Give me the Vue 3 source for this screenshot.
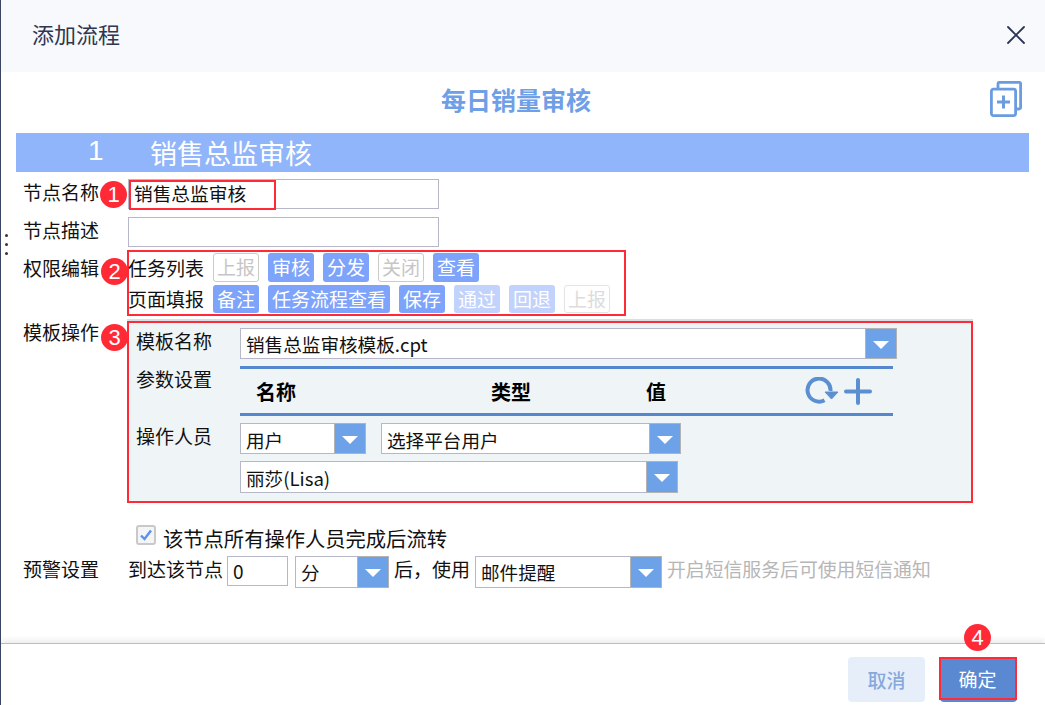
<script setup>
const taskButtons = [
  { text: '上报', kind: 'outline' },
  { text: '审核', kind: 'on' },
  { text: '分发', kind: 'on' },
  { text: '关闭', kind: 'outline' },
  { text: '查看', kind: 'on' }
]
const pageButtons = [
  { text: '备注', kind: 'on' },
  { text: '任务流程查看', kind: 'on' },
  { text: '保存', kind: 'on' },
  { text: '通过', kind: 'soft' },
  { text: '回退', kind: 'soft' },
  { text: '上报', kind: 'faint' }
]
</script>

<template>
  <div class="dialog">
    <div class="grip"><i></i><i></i><i></i></div>
    <header class="head">
      <span class="head-title">添加流程</span>
      <svg class="close" width="18" height="18" viewBox="0 0 18 18">
        <path d="M1 1L17 17M17 1L1 17" stroke="#2c3452" stroke-width="1.8" fill="none" stroke-linecap="round" />
      </svg>
    </header>

    <main class="body">
      <div class="title-row">
        <span class="flow-name">每日销量审核</span>
        <svg class="copy" width="32" height="36" viewBox="0 0 32 36">
          <path d="M8 7V2.5A1.2 1.2 0 0 1 9.2 1.4H29.3A1.3 1.3 0 0 1 30.6 2.7V26.5A1.5 1.5 0 0 1 29 28H26" fill="none" stroke="#6c9ce0" stroke-width="2.8" />
          <rect x="1.4" y="8.2" width="24.2" height="26.4" rx="2" fill="#fff" stroke="#6c9ce0" stroke-width="2.8" />
          <path d="M7 21H20M13.5 14.5V27.5" stroke="#6c9ce0" stroke-width="3" fill="none" />
        </svg>
      </div>

      <div class="bar"><span class="bar-no">1</span><span>销售总监审核</span></div>

      <div class="row r-name">
        <span class="label">节点名称</span>
        <div class="field-wrap">
          <div class="input wide">销售总监审核</div>
          <span class="mark-name"></span>
          <span class="badge b1">1</span>
        </div>
      </div>

      <div class="row r-desc">
        <span class="label">节点描述</span>
        <div class="input wide"></div>
      </div>

      <div class="row r-perm">
        <span class="label">权限编辑</span>
        <div class="perm">
          <span class="badge b2">2</span>
          <div class="perm-row first">
            <span class="perm-label">任务列表</span>
            <span v-for="b in taskButtons" :key="b.text" class="tag" :class="b.kind">{{ b.text }}</span>
          </div>
          <div class="perm-row second">
            <span class="perm-label">页面填报</span>
            <span v-for="b in pageButtons" :key="b.text" class="tag" :class="b.kind">{{ b.text }}</span>
          </div>
        </div>
      </div>

      <div class="row r-tpl">
        <span class="label lbl-tpl">模板操作</span>
        <div class="panel">
          <span class="badge b3">3</span>
          <div class="p-row p-first">
            <span class="p-label">模板名称</span>
            <div class="select s-tpl"><span class="s-text">销售总监审核模板.cpt</span><span class="arrow"></span></div>
          </div>
          <div class="p-row p-param">
            <span class="p-label">参数设置</span>
            <div class="table-head">
              <b class="c1">名称</b>
              <b class="c2">类型</b>
              <b class="c3">值</b>
              <svg class="refresh" width="34" height="28" viewBox="0 0 34 28">
                <path d="M19.5 23.2A11.5 11.5 0 1 1 25.5 14" fill="none" stroke="#5b8fcf" stroke-width="4" />
                <path d="M20 15H33L26.5 22Z" fill="#5b8fcf" stroke="#5b8fcf" stroke-width="1" stroke-linejoin="round" />
              </svg>
              <svg class="plus" width="28" height="27" viewBox="0 0 28 27">
                <path d="M2 13.5H26M14 2V25" stroke="#5b8fcf" stroke-width="4" stroke-linecap="round" fill="none" />
              </svg>
            </div>
          </div>
          <div class="p-row p-op">
            <span class="p-label">操作人员</span>
            <div class="op-col">
              <div class="op-line">
                <div class="select s-user"><span class="s-text">用户</span><span class="arrow"></span></div>
                <div class="select s-plat"><span class="s-text">选择平台用户</span><span class="arrow"></span></div>
              </div>
              <div class="select s-lisa"><span class="s-text">丽莎(Lisa)</span><span class="arrow"></span></div>
            </div>
          </div>
        </div>
      </div>

      <div class="check-row">
        <svg class="check" width="20" height="20" viewBox="0 0 20 20">
          <rect x="1" y="1" width="18" height="18" rx="2" fill="#f4f5f7" stroke="#c9c9c9" stroke-width="2" />
          <path d="M5 10.5L8.5 14L15 5.5" fill="none" stroke="#5c8ff0" stroke-width="2.4" />
        </svg>
        <span>该节点所有操作人员完成后流转</span>
      </div>

      <div class="row r-warn">
        <span class="label">预警设置</span>
        <span class="w-text">到达该节点</span>
        <div class="input w-num">0</div>
        <div class="select s-unit"><span class="s-text">分</span><span class="arrow"></span></div>
        <span class="w-after">后，使用</span>
        <div class="select s-mail"><span class="s-text">邮件提醒</span><span class="arrow"></span></div>
        <span class="w-hint">开启短信服务后可使用短信通知</span>
      </div>
    </main>

    <footer class="foot">
      <button class="btn cancel">取消</button>
      <button class="btn ok">确定<span class="badge b4">4</span></button>
    </footer>
  </div>
</template>

<style scoped>
.dialog {
  position: relative;
  width: 1045px;
  height: 705px;
  box-sizing: border-box;
  border-left: 1px solid #3b4463;
  display: flex;
  flex-direction: column;
  overflow: hidden;
  background: #fff;
  color: #111;
  font-family: "Noto Sans CJK SC", "Noto Sans", sans-serif;
  font-size: 19px;
}
.grip {
  position: absolute;
  left: 4px;
  top: 234px;
  display: flex;
  flex-direction: column;
  gap: 6px;
}
.grip i {
  width: 3px;
  height: 3px;
  background: #333;
  border-radius: 50%;
}
.head {
  height: 72px;
  flex: none;
  box-sizing: border-box;
  background: #f8f9fd;
  display: flex;
  align-items: center;
  justify-content: space-between;
  padding: 0 20px 2px 31px;
}
.head-title {
  font-size: 22px;
  line-height: 30px;
  margin-bottom: 5px;
  color: #2f3650;
}
.body {
  flex: 1;
  padding: 0 16px 0 15px;
  min-height: 0;
}
.title-row {
  height: 61px;
  box-sizing: border-box;
  padding: 9px 7px 16px 0;
  display: grid;
  grid-template-columns: 425px auto 1fr;
  align-items: center;
}
.flow-name {
  grid-column: 2;
  font-size: 25px;
  line-height: 36px;
  font-weight: 700;
  color: #6f9fe6;
}
.copy {
  grid-column: 3;
  justify-self: end;
}
.bar {
  height: 39px;
  background: #90b5fa;
  color: #fff;
  font-size: 27px;
  line-height: 39px;
  padding-left: 72px;
  display: flex;
}
.bar-no {
  width: 62px;
  font-family: "Liberation Sans", sans-serif;
  font-size: 28px;
  line-height: 36px;
}
.row {
  display: flex;
}
.label {
  width: 105px;
  flex: none;
  padding-left: 7px;
  line-height: 26px;
}
.r-name {
  margin-top: 7px;
  height: 30px;
}
.r-desc {
  margin-top: 8px;
  height: 30px;
}
.field-wrap {
  position: relative;
}
.input {
  box-sizing: border-box;
  height: 30px;
  border: 1px solid #b6b8ca;
  background: #fff;
  padding-left: 5px;
  line-height: 28px;
  font-size: 18.7px;
}
.wide {
  width: 311px;
  line-height: 25px;
}
.mark-name {
  position: absolute;
  left: 1px;
  top: 1px;
  width: 147px;
  height: 30px;
  box-sizing: border-box;
  border: 2px solid #ff2a36;
}
.badge {
  position: absolute;
  width: 27px;
  height: 27px;
  border-radius: 50%;
  background: #ff2a36;
  color: #fff;
  font-family: "Liberation Sans", sans-serif;
  font-size: 22px;
  font-weight: 400;
  line-height: 27px;
  text-align: center;
}
.b1 { left: -28px; top: 2px; }
.b2 { left: -28px; top: 6px; }
.b3 { left: -28px; top: 1px; }
.b4 { left: 24px; top: -33px; }
.r-perm {
  margin-top: 3px;
  position: relative;
}
.r-perm .label {
  line-height: 36px;
}
.perm {
  position: relative;
  margin-left: -1px;
  width: 499px;
  height: 66px;
  box-sizing: border-box;
  border: 2px solid #ff2a36;
  padding: 1px 0;
}
.perm-row {
  display: flex;
  gap: 9px;
  align-items: center;
}
.perm-row.first { height: 29px; }
.perm-row.second { height: 28px; margin-top: 3px; }
.perm-label {
  width: 75px;
  line-height: 28px;
  white-space: nowrap;
  text-indent: -1px;
}
.tag {
  box-sizing: border-box;
  height: 100%;
  padding: 0 3px;
  border-radius: 3px;
  line-height: 26px;
  border: 1px solid transparent;
  color: #fff;
  white-space: nowrap;
}
.tag.on { background: #7da3fb; }
.tag.soft { background: #c1d2fc; }
.tag.outline { border-color: #cbcbcb; color: #c6c6c6; background: #fff; }
.tag.faint { border-color: #e4e4e4; color: #dcdcdc; background: #fff; }
.r-tpl {
  margin-top: 5px;
}
.lbl-tpl {
  line-height: 22px;
}
.panel {
  position: relative;
  margin-left: -1px;
  width: 846px;
  height: 182px;
  box-sizing: border-box;
  border: 2px solid #ff2a36;
  background: #eff4f7;
  box-shadow: 0 -2px 0 #d6dee6;
  padding: 5px 0 0 7px;
}
.p-row {
  display: flex;
}
.p-label {
  width: 104px;
  flex: none;
  line-height: 26px;
}
.p-param {
  margin-top: 7px;
}
.p-op {
  margin-top: 7px;
}
.select {
  box-sizing: border-box;
  display: flex;
  align-items: stretch;
  height: 31px;
  border: 1px solid #b6b8ca;
  background: #fff;
}
.s-text {
  flex: 1;
  padding-left: 5px;
  line-height: 29px;
  font-size: 18.6px;
  white-space: nowrap;
}
.op-col .s-text {
  line-height: 31px;
}
.arrow {
  position: relative;
  width: 30px;
  flex: none;
  background: #6ea2e8;
  box-shadow: 0 0 0 1px #b3b3b3;
}
.arrow::after {
  content: "";
  position: absolute;
  left: 7px;
  top: 12px;
  border-style: solid;
  border-width: 8px 8px 0;
  border-color: #fff transparent transparent;
}
.s-tpl { width: 657px; }
.s-user { width: 126px; }
.s-plat { width: 300px; }
.s-lisa { width: 438px; margin-top: 7px; height: 32px; }
.op-line {
  display: flex;
  gap: 15px;
}
.table-head {
  width: 653px;
  height: 50px;
  box-sizing: border-box;
  border-top: 3px solid #5587cf;
  border-bottom: 3px solid #5587cf;
  display: flex;
  align-items: center;
  padding-left: 16px;
  font-size: 20px;
  color: #000;
}
.table-head b {
  display: block;
  font-weight: 700;
}
.c1 { width: 235px; }
.c2 { width: 155px; }
.c3 { width: 159px; }
.refresh { flex: none; }
.plus { flex: none; margin-left: 5px; }
.check-row {
  margin-top: 22px;
  padding-left: 120px;
  height: 26px;
  display: flex;
  gap: 7px;
  font-size: 20.3px;
  line-height: 26px;
}
.check { flex: none; }
.r-warn {
  margin-top: 5px;
  align-items: flex-start;
  height: 32px;
}
.r-warn .label {
  line-height: 26px;
}
.w-text,
.w-after,
.w-hint {
  line-height: 26px;
  white-space: nowrap;
}
.w-text { width: 99px; }
.w-num {
  width: 61px;
  font-size: 19px;
}
.s-unit {
  width: 94px;
  height: 32px;
  margin-left: 7px;
}
.w-after {
  margin-left: 5px;
  width: 81px;
}
.s-mail {
  width: 187px;
  height: 32px;
}
.w-hint {
  margin-left: 5px;
  color: #b6b6b6;
  font-size: 18.85px;
}
.foot {
  flex: none;
  height: 62px;
  box-sizing: border-box;
  border-top: 1px solid #bdbdbd;
  box-shadow: 0 -3px 6px rgba(0, 0, 0, 0.08);
  position: relative;
  background: #fff;
  display: flex;
  justify-content: flex-end;
  gap: 15px;
  padding: 13px 28px 0 0;
}
.btn {
  position: relative;
  width: 77px;
  height: 45px;
  border: none;
  border-radius: 4px;
  font-family: inherit;
  font-size: 19px;
  padding: 0;
}
.cancel {
  background: #e6eff9;
  color: #86a8dc;
  font-weight: 500;
}
.ok {
  background: #5a89d2;
  color: #fff;
  padding: 0 2px 3px 0;
}
.ok::after {
  content: "";
  position: absolute;
  left: -1px;
  right: 0;
  top: 0;
  height: 43px;
  box-sizing: border-box;
  border: 2px solid #ff2a36;
}
</style>
